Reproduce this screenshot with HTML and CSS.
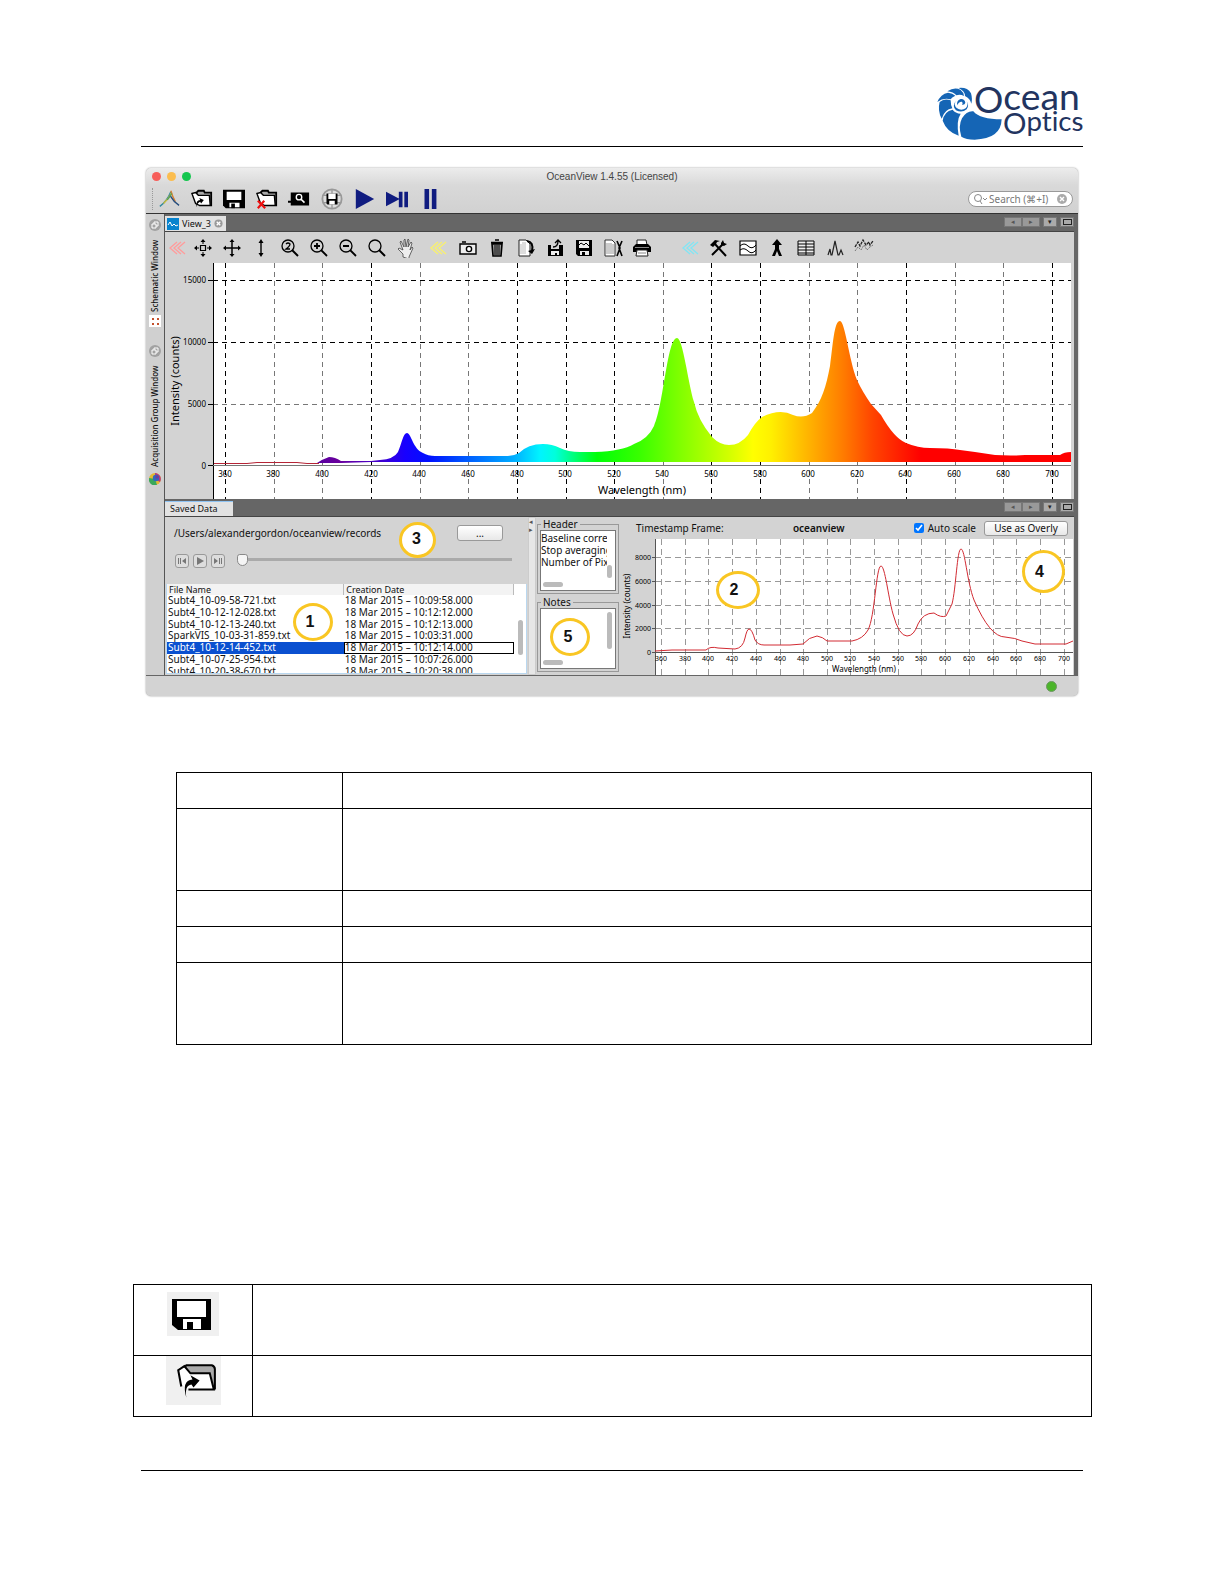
FILE: index.html
```html
<!DOCTYPE html>
<html lang="en">
<head>
<meta charset="utf-8">
<title>OceanView saved data</title>
<link rel="stylesheet" href="styles.css">
</head>
<body>
<header class="page-head">
  <svg class="brand" viewBox="48 42 435 168" role="img" aria-label="Ocean Optics">
    <g fill="#1565b5">
      <path d="M124 200Q114 168 126 145Q140 122 160 124Q180 148 245 148Q243 207 164 209Q138 209 124 200Z"/>
      <path d="M116 197Q80 185 68 152Q72 124 98 119Q106 130 122 131Q108 152 116 197Z"/>
      <path d="M65 146Q52 122 59 96Q72 84 92 91Q92 106 97 115Q74 118 65 146Z"/>
      <path d="M52 96Q62 72 84 68Q98 70 106 77Q95 82 92 88Q70 82 52 96Z"/>
      <path d="M82 64Q104 50 122 60Q132 68 132 78Q120 71 109 76Q100 66 82 64Z"/>
      <path d="M116 54Q142 51 153 70Q158 88 154 101Q151 86 135 78Q135 63 116 54Z"/>
      <path d="M108 92Q100 104 110 114Q124 124 138 114Q146 104 140 94Q149 106 140 118Q126 130 108 121Q95 108 108 92Z"/>
      <path d="M112 106Q108 92 122 87Q134 86 136 98Q134 106 126 104Q130 99 126 95Q116 94 112 106Z"/>
    </g>
    <g fill="#22345f" class="brand-text">
      <text x="162" y="129" font-size="110">O<tspan y="120" font-size="112">cean</tspan></text>
      <text x="249" y="193" font-size="88">O<tspan y="183" font-size="83">ptics</tspan></text>
    </g>
  </svg>
</header>

<section class="app">
  <div class="titlebar">
    <span class="light red"></span><span class="light amber"></span><span class="light green"></span>
    <h1>OceanView 1.4.55 (Licensed)</h1>
  </div>
  <div class="mainbar">
    <div class="tools">
      <button aria-label="Home"><svg viewBox="0 0 24 24"><g fill="none" stroke-width="1.500"><path d="M2 20Q10 14 14 4" stroke="#31899e"/><path d="M6 17Q12 11 15 5" stroke="#c9bb36"/><path d="M14 3Q16 10 19 15" stroke="#d58031"/><path d="M13 8Q17 15 23 19" stroke="#244c7c"/><path d="M10 13Q14 8 15 6" stroke="#50a05c"/></g></svg></button>
      <button aria-label="Open"><svg viewBox="0 0 24 24"><path d="M6 8V5l2-2h6l1 2h7v14H9" fill="#aaa" stroke="#000" stroke-width="2"/><path d="M1 6l4-1 3 3h12l1 11H9L5 17z" fill="#fff" stroke="#000" stroke-width="1.500"/><path d="M6 21Q5 13 10 13l-1-2 5 2-3 4-1-2Q7 16 6 21Z"/></svg></button>
      <button aria-label="Save"><svg viewBox="0 0 24 24"><path d="M0 2h24v20H3l-3-3z"/><path d="M4 4h16v9H4zM7 16h11v5H7z" fill="#fff"/><path d="M9 17h4v5H9z"/></svg></button>
      <button aria-label="Close project"><svg viewBox="0 0 24 24"><path d="M5 8V5l2-2h6l1 2h8v14H9" fill="#aaa" stroke="#000" stroke-width="2"/><path d="M1 6l4-1 3 3h12l1 11H9L5 17z" fill="#fff" stroke="#000" stroke-width="1.500"/><path d="M2 14l8 8M9 14l-7 8" stroke="#e11" stroke-width="2.400"/></svg></button>
      <button aria-label="Find devices"><svg viewBox="0 0 24 24"><path d="M3 5h20v14H3v-3H0v-2h3z"/><circle cx="12" cy="10" r="3" fill="none" stroke="#fff" stroke-width="1.500"/><path d="M14 12l4 4" stroke="#fff" stroke-width="1.800"/></svg></button>
      <button aria-label="Save to web"><svg viewBox="0 0 24 24"><circle cx="12" cy="12" r="10.500" fill="#ddd" stroke="#999" stroke-width="2"/><path d="M2 8h20M2 16h20M12 2v20" stroke="#999" stroke-width="1.500"/><path d="M6 6h12v12H7l-1-1z"/><path d="M8 6h8v6H8zM9 14h6v4H9z" fill="#fff"/></svg></button>
      <button aria-label="Play"><svg viewBox="0 0 24 24"><path d="M2 1l20 11L2 23z" fill="#101c80"/></svg></button>
      <button aria-label="Step"><svg viewBox="0 0 24 24"><path d="M0 4l15 8-15 8zM14 4h4v17h-4zM20 4h4v17h-4z" fill="#101c80"/></svg></button>
      <button aria-label="Pause"><svg viewBox="0 0 24 24"><path d="M6 1h5v22H6zM14 1h5v22h-5z" fill="#101c80"/></svg></button>
    </div>
    <label class="search"><svg viewBox="0 0 14 12"><circle cx="5" cy="5" r="3.500" fill="none" stroke="#888"/><path d="M7 8l2 3M10 5l2 2 2-2" fill="none" stroke="#888"/></svg><input type="text" aria-label="Search" placeholder="Search (⌘+I)"><svg class="clear" viewBox="0 0 12 12"><circle cx="6" cy="6" r="5" fill="#aaa"/><path d="M4 4l4 4M8 4l-4 4" stroke="#fff" stroke-width="1.400"/></svg></label>
  </div>

  <div class="body">
    <aside class="side">
      <svg class="pin" viewBox="0 0 12 12"><circle cx="6" cy="6" r="6" fill="#a2a2a2"/><path d="M3 5h4v4H3zM5 5V3h4v4H7" fill="none" stroke="#fff"/></svg>
      <span class="vtext schematic">Schematic Window</span>
      <svg class="pin gap-b" viewBox="0 0 12 12"><path d="M0 0h12v12H0z" fill="#fff"/><path d="M3 3h2v2H3zM8 3h2v2H8zM3 8h2v2H3zM8 8h2v2H8z" fill="#c4502c"/></svg>
      <svg class="pin" viewBox="0 0 12 12"><circle cx="6" cy="6" r="6" fill="#a2a2a2"/><path d="M3 5h4v4H3zM5 5V3h4v4H7" fill="none" stroke="#fff"/></svg>
      <span class="vtext acquisition">Acquisition Group Window</span>
      <svg class="pin" viewBox="0 0 12 12"><circle cx="6" cy="6" r="6" fill="#e3ba34"/><path d="M6 0a6 6 0 0 1 5 9L6 6z" fill="#b73682"/><path d="M0 5a6 6 0 0 0 8 7L6 6z" fill="#39a85b"/><circle cx="7" cy="5" r="3.200" fill="#3267bd"/><circle cx="8" cy="4" r="1.600" fill="#713a9c"/></svg>
    </aside>

    <div class="content">
      <div class="tabstrip">
        <div class="tab view-tab"><svg class="pin" viewBox="0 0 12 12"><path d="M0 0h12v12H0z" fill="#0783ce"/><path d="M1 7l2-3 2 4 2-2 2 2 2-1" fill="none" stroke="#fff"/></svg><span>View_3</span><svg class="close" viewBox="0 0 10 10"><circle cx="5" cy="5" r="4.500" fill="#999"/><path d="M3 3l4 4M7 3L3 7" stroke="#fff" stroke-width="1.400"/></svg></div>
        <div class="wincontrols"><button>◂</button><button>▸</button><button class="apart">▾</button><button class="apart" aria-label="Maximize"><i></i></button></div>
      </div>

      <div class="viewbar">
        <svg class="chev pink" viewBox="0 0 20 20"><path d="M10 4L3 10l7 6M14 4l-7 6 7 6M18 4l-7 6 7 6" fill="none" stroke="#ff9c9c" stroke-width="1.300"/></svg>
        <div class="icons">
          <button aria-label="Scale to fill"><svg viewBox="0 0 20 20"><path d="M7.500 7.500h5v5h-5z" fill="none" stroke="#000" stroke-width="1.200"/><path d="M10 1l2.500 3h-5zM10 19l2.500-3h-5zM1 10l3-2.500v5zM19 10l-3-2.500v5z"/><path d="M10 3v3M10 14v3M3 10h3M14 10h3" stroke="#000"/></svg></button>
          <button aria-label="Scale"><svg viewBox="0 0 20 20"><path d="M10 3v14M3 10h14" stroke="#000" stroke-width="1.500"/><path d="M10 1l2.500 3h-5zM10 19l2.500-3h-5zM1 10l3-2.500v5zM19 10l-3-2.500v5z"/></svg></button>
          <button aria-label="Scale height"><svg viewBox="0 0 20 20"><path d="M10 3v14" stroke="#000" stroke-width="1.400"/><path d="M10 1l2.500 4h-5zM10 19l2.500-4h-5z"/></svg></button>
          <button aria-label="Zoom reset"><svg viewBox="0 0 20 20"><circle cx="8" cy="8" r="6" fill="none" stroke="#000" stroke-width="1.300"/><path d="M12 12l6 6" stroke="#000" stroke-width="2"/><path d="M6 6q2-2 4 0 0 2-4 5h4" fill="none" stroke="#000" stroke-width="1.300"/></svg></button>
          <button aria-label="Zoom in"><svg viewBox="0 0 20 20"><circle cx="8" cy="8" r="6" fill="none" stroke="#000" stroke-width="1.300"/><path d="M12 12l6 6M5 8h6M8 5v6" stroke="#000" stroke-width="1.800"/></svg></button>
          <button aria-label="Zoom out"><svg viewBox="0 0 20 20"><circle cx="8" cy="8" r="6" fill="none" stroke="#000" stroke-width="1.300"/><path d="M12 12l6 6M5 8h6" stroke="#000" stroke-width="1.800"/></svg></button>
          <button aria-label="Zoom region"><svg viewBox="0 0 20 20"><circle cx="8" cy="8" r="6" fill="none" stroke="#000" stroke-width="1.300"/><path d="M12 12l6 6" stroke="#000" stroke-width="2"/></svg></button>
          <button aria-label="Pan"><svg viewBox="0 0 20 20"><path d="M7 19v-3L2 11l1-1 4 2L4 4l1-1 3 6V2l1-1 1 8 2-8 1 1-1 7 3-5 1 1-2 7 2-3 1 1-4 9v2z" fill="#eee" stroke="#444" stroke-width=".8"/></svg></button>
        </div>
        <svg class="chev yellow" viewBox="0 0 20 20"><path d="M10 4L3 10l7 6M14 4l-7 6 7 6M18 4l-7 6 7 6" fill="none" stroke="#f7ef73" stroke-width="1.500"/></svg>
        <div class="icons">
          <button aria-label="Snapshot"><svg viewBox="0 0 20 20"><path d="M2 6h16v10H2zM4 4h4" fill="#eee" stroke="#000" stroke-width="1.400"/><circle cx="11" cy="11" r="2.600" fill="#fff" stroke="#000" stroke-width="1.400"/></svg></button>
          <button aria-label="Delete"><svg viewBox="0 0 20 20"><path d="M4 4.500h12M8 2h4M5 6h10l-1 12H6z" fill="#999" stroke="#000" stroke-width="1.600"/><path d="M8 7v10M12 7v10M10 7v10" stroke="#000"/></svg></button>
          <button aria-label="Copy data"><svg viewBox="0 0 20 20"><path d="M3 2h7l4 4v12H3z" fill="#fff" stroke="#222"/><path d="M5 6v10M7 4v12M9 4v12" stroke="#bbb"/><path d="M11 3q7 1 5 10" stroke="#000" stroke-width="2" fill="none"/><path d="M19 11l-3 5-4-3z"/></svg></button>
          <button aria-label="Save settings"><svg viewBox="0 0 20 20"><path d="M3 7h3v4h8V7h4v11H3z"/><path d="M6 13h8v4H6z" fill="#eee"/><path d="M10 15h2v3h-2z"/><path d="M8 9q5 0 5-6M10 5l3-3 3 3" fill="none" stroke="#000" stroke-width="1.300"/></svg></button>
          <button aria-label="Save graph"><svg viewBox="0 0 20 20"><path d="M2 2h16v16H4l-2-2z"/><path d="M5 3h10v7H5zM6 13h9v4H6z" fill="#eee"/><path d="M5 7l2-2 3 2 2-2 3 3" fill="none" stroke="#000"/><path d="M8 14h3v3H8z"/></svg></button>
          <button aria-label="Configure saving"><svg viewBox="0 0 20 20"><path d="M2 2h7l3 3v13H2z" fill="#fff" stroke="#333"/><path d="M4 5v11M6 5v11M8 5v11M10 6v10" stroke="#999"/><path d="M14 3l3 7-3 8M19 3l-3 7 3 8" fill="none" stroke="#000" stroke-width="1.600"/></svg></button>
          <button aria-label="Print"><svg viewBox="0 0 20 20"><path d="M5 2h9l1 5H5z" fill="#fff" stroke="#222"/><path d="M1 9l3-3h12l3 3v5H1z"/><path d="M5 12h10l1 6H4z" fill="#fff" stroke="#222"/><path d="M3 9.500h14M6 15h8" stroke="#888"/></svg></button>
        </div>
        <svg class="chev cyan" viewBox="0 0 20 20"><path d="M10 4L3 10l7 6M14 4l-7 6 7 6M18 4l-7 6 7 6" fill="none" stroke="#82e5f4" stroke-width="1.300"/></svg>
        <div class="icons">
          <button aria-label="Tools"><svg viewBox="0 0 20 20"><path d="M5 5l12 13M15 5L3 17" stroke="#000" stroke-width="2"/><path d="M1 7l5-5 5 1-3 1-1 2-3 3zM12 5l2-3 1 3 3 1-3 2-3-1z"/></svg></button>
          <button aria-label="Overlay"><svg viewBox="0 0 20 20"><path d="M2 3h16v14H2z" fill="#fff" stroke="#000" stroke-width="1.200"/><path d="M2 8q4-4 8 0t8-1M2 12q4-3 8 1t8-1" fill="none" stroke="#000"/></svg></button>
          <button aria-label="Peaks"><svg viewBox="0 0 20 20"><path d="M10 1l5 6h-3v4l3 7h-3l-2-5-2 5H5l3-7V7H5z"/></svg></button>
          <button aria-label="Table"><svg viewBox="0 0 20 20"><path d="M2 3h16v14H2zM2 6h16M2 9h16M2 12h16M2 15h16M10 3v14" fill="#eee" stroke="#000"/></svg></button>
          <button aria-label="Peak metrics"><svg viewBox="0 0 20 20"><path d="M3 17l2-6 1 6h1l3-14 3 14h1l2-5 2 5" fill="none" stroke="#222" stroke-width="1.200"/></svg></button>
          <button aria-label="Trends"><svg viewBox="0 0 20 20"><path d="M1 9l3-5 2 4 3-6 3 5 3-3 1 3 3-4" fill="none" stroke="#222" stroke-width="1.300" stroke-dasharray="3 1"/><path d="M1 13l3-4 3 3 3-5 3 5 3-3 3-2" fill="none" stroke="#777" stroke-dasharray="2 1"/></svg></button>
        </div>
      </div>

      <svg class="chart" viewBox="165 263 909 236" role="img" aria-label="Intensity against wavelength">
        <defs><linearGradient id="spectrum" gradientUnits="userSpaceOnUse" x1="321" y1="0" x2="921" y2="0">
          <stop offset="0" stop-color="#5b00a0"/><stop offset=".03" stop-color="#6a009c"/><stop offset=".1" stop-color="#4000d0"/><stop offset=".14" stop-color="#1800ff"/><stop offset=".18" stop-color="#0010ff"/><stop offset=".24" stop-color="#0058ff"/><stop offset=".32" stop-color="#00acff"/><stop offset=".365" stop-color="#00f4ff"/><stop offset=".39" stop-color="#00ffdc"/><stop offset=".43" stop-color="#00ff60"/><stop offset=".46" stop-color="#00ff08"/><stop offset=".53" stop-color="#38ff00"/><stop offset=".6" stop-color="#82ff00"/><stop offset=".68" stop-color="#d2ff00"/><stop offset=".72" stop-color="#ffff00"/><stop offset=".75" stop-color="#fff000"/><stop offset=".82" stop-color="#ffac00"/><stop offset=".87" stop-color="#ff7c00"/><stop offset=".92" stop-color="#ff4400"/><stop offset="1" stop-color="#f00"/>
        </linearGradient></defs>
        <path d="M213 263h858v236H213z" fill="#fff"/>
        <g fill="none" stroke-dasharray="5 4">
          <path stroke="#777" d="M274.500 263v236M322.500 263v236M420.500 263v236M468.500 263v236M663.500 263v236M809.500 263v236M857.500 263v236M955.500 263v236M1003.500 263v236M213 404.500h858"/>
          <path stroke="#000" d="M225.500 263v236M371.500 263v236M517.500 263v236M566.500 263v236M614.500 263v236M711.500 263v236M760.500 263v236M906.500 263v236M1052.500 263v236M213 280.500h858M213 342.500h858"/>
        </g>
        <path fill="url(#spectrum)" d="M317 463Q323 459 329 457Q335 457 341 461L371 461 380 460Q394 459 398 452C402 443 403 433 407 433C411 433 413 449 423 453Q428 456 435 456L505 456Q514 456 519 453Q528 444 543 444Q552 444 560 448Q568 452 580 452L595 452Q622 451 634 444Q648 439 654 426C664 404 667 338 677 338C683 338 688 383 694 402Q698 420 712 437Q720 445 729 445Q740 445 748 435Q755 422 762 417Q780 408 793 415Q803 419 812 413C822 400 826 387 830 366C833 345 834 321 840 321C845 321 849 360 857 380Q862 391 871 404L881 415Q894 438 906 443Q918 448 930 448Q950 448 960 450L975 452Q1000 457 1025 455L1060 455Q1064 452 1071 452V462H371L341 463Z"/>
        <path d="M213 463.500h34l10-1h40l10 1h12" fill="none" stroke="#b52536"/>
        <path d="M213.500 263v236M208 280.500h5M208 342.500h5M208 404.500h5M208 465.500h5" stroke="#000"/><path d="M213 465.500h858" stroke="#777"/>
        <g class="tick" text-anchor="end"><text x="206" y="283">15000</text><text x="206" y="345">10000</text><text x="206" y="407">5000</text><text x="206" y="469">0</text></g>
        <g class="tick" text-anchor="middle"><text x="225" y="477">360</text><text x="273" y="477">380</text><text x="322" y="477">400</text><text x="371" y="477">420</text><text x="419" y="477">440</text><text x="468" y="477">460</text><text x="517" y="477">480</text><text x="565" y="477">500</text><text x="614" y="477">520</text><text x="662" y="477">540</text><text x="711" y="477">560</text><text x="760" y="477">580</text><text x="808" y="477">600</text><text x="857" y="477">620</text><text x="905" y="477">640</text><text x="954" y="477">660</text><text x="1003" y="477">680</text><text x="1052" y="477">700</text></g>
        <g class="axis" text-anchor="middle"><text x="642" y="494">Wavelength (nm)</text><text transform="translate(179 381) rotate(-90)">Intensity (counts)</text></g>
      </svg>

      <div class="tabstrip lower">
        <div class="tab saved-tab">Saved Data</div>
        <div class="wincontrols"><button>◂</button><button>▸</button><button class="apart">▾</button><button class="apart" aria-label="Maximize"><i></i></button></div>
      </div>

      <div class="saved">
        <section class="files">
          <div class="path"><span>/Users/alexandergordon/oceanview/records</span><button class="push browse">...</button></div>
          <div class="playback">
            <button aria-label="Previous"><svg viewBox="0 0 12 12"><path d="M2 3h1v6H2zM4 3h1v6H4zM10 3v6L6 6z" fill="#777"/></svg></button>
            <button aria-label="Play"><svg viewBox="0 0 12 12"><path d="M3 2l7 4-7 4z" fill="#777"/></svg></button>
            <button aria-label="Next"><svg viewBox="0 0 12 12"><path d="M2 3v6l4-3zM7 3h1v6H7zM9 3h1v6H9z" fill="#777"/></svg></button>
            <input type="range" aria-label="Position" min="0" max="100" value="0">
          </div>
          <div class="filelist">
            <table>
              <thead><tr><th>File Name</th><th>Creation Date</th></tr></thead>
              <tbody>
                <tr><td>Subt4_10-09-58-721.txt</td><td>18 Mar 2015 – 10:09:58.000</td></tr>
                <tr><td>Subt4_10-12-12-028.txt</td><td>18 Mar 2015 – 10:12:12.000</td></tr>
                <tr><td>Subt4_10-12-13-240.txt</td><td>18 Mar 2015 – 10:12:13.000</td></tr>
                <tr><td>SparkVIS_10-03-31-859.txt</td><td>18 Mar 2015 – 10:03:31.000</td></tr>
                <tr class="selected"><td>Subt4_10-12-14-452.txt</td><td>18 Mar 2015 – 10:12:14.000</td></tr>
                <tr><td>Subt4_10-07-25-954.txt</td><td>18 Mar 2015 – 10:07:26.000</td></tr>
                <tr><td>Subt4_10-20-38-670.txt</td><td>18 Mar 2015 – 10:20:38.000</td></tr>
              </tbody>
            </table>
            <span class="scroll"></span>
          </div>
          <b class="callout c1">1</b><b class="callout c3">3</b>
        </section>
        <div class="split">◂<br>▸</div>
        <section class="info">
          <fieldset><legend>Header</legend><div class="box"><p>Baseline corre<br>Stop averaging<br>Number of Pix</p><span class="vbar short"></span><span class="hbar"></span></div></fieldset>
          <fieldset><legend>Notes</legend><div class="box"><span class="vbar"></span><span class="hbar"></span></div></fieldset>
          <b class="callout c5">5</b>
        </section>
        <section class="preview">
          <div class="previewbar"><span>Timestamp Frame:</span><strong>oceanview</strong><label><input type="checkbox" checked>Auto scale</label><button class="push overlay">Use as Overly</button></div>
          <svg class="chart" viewBox="621 539 453 136" role="img" aria-label="Saved spectrum">
            <path d="M655 539h418v136H655z" fill="#fff"/>
            <path fill="none" stroke="#999" stroke-dasharray="6 4" d="M661.500 539v136M685.500 539v136M708.500 539v136M732.500 539v136M756.500 539v136M780.500 539v136M803.500 539v136M827.500 539v136M850.500 539v136M874.500 539v136M898.500 539v136M921.500 539v136M945.500 539v136M969.500 539v136M993.500 539v136M1016.500 539v136M1040.500 539v136M1064.500 539v136M655 557.500h418M655 581.500h418M655 605.500h418M655 628.500h418"/>
            <path d="M655.500 539v136M655 652.500h418M652 557.500h3M652 581.500h3M652 605.500h3M652 628.500h3M652 652.500h3" stroke="#555"/>
            <path fill="none" stroke="#d22b33" d="M655 651L672 650 706 650Q710 646 718 648L735 649Q743 648 745 638Q747 629 749 629Q752 629 755 640Q758 645 764 645L790 645 803 644Q809 637 817 636Q823 637 827 641L852 641Q863 639 868 630C875 617 876 566 881 566C885 566 888 596 893 614Q899 636 907 636Q914 636 918 624Q923 613 934 613Q941 618 946 616L952 604C956 589 957 549 961 549C965 549 967 582 974 600Q990 637 1005 637Q1016 638 1022 641L1035 644 1066 644 1073 641"/>
            <g class="minitick" text-anchor="end"><text x="651" y="560">8000</text><text x="651" y="584">6000</text><text x="651" y="608">4000</text><text x="651" y="631">2000</text><text x="651" y="655">0</text></g>
            <g class="minitick" text-anchor="middle"><text x="661" y="661">360</text><text x="685" y="661">380</text><text x="708" y="661">400</text><text x="732" y="661">420</text><text x="756" y="661">440</text><text x="780" y="661">460</text><text x="803" y="661">480</text><text x="827" y="661">500</text><text x="850" y="661">520</text><text x="874" y="661">540</text><text x="898" y="661">560</text><text x="921" y="661">580</text><text x="945" y="661">600</text><text x="969" y="661">620</text><text x="993" y="661">640</text><text x="1016" y="661">660</text><text x="1040" y="661">680</text><text x="1064" y="661">700</text></g>
            <g class="miniaxis" text-anchor="middle"><text x="864" y="672">Wavelength (nm)</text><text transform="translate(630 606) rotate(-90)">Intensity (counts)</text></g>
          </svg>
          <b class="callout c2">2</b><b class="callout c4">4</b>
        </section>
      </div>
    </div>
  </div>
  <footer class="status"><span class="led"></span></footer>
</section>

<table class="legend">
  <tbody>
    <tr class="r36"><td></td><td></td></tr>
    <tr class="r82"><td></td><td></td></tr>
    <tr class="r36"><td></td><td></td></tr>
    <tr class="r36"><td></td><td></td></tr>
    <tr class="r82"><td></td><td></td></tr>
  </tbody>
</table>

<table class="iconlist">
  <tbody>
    <tr class="save-row"><td><span class="tile"><svg viewBox="0 0 52 44" role="img" aria-label="Save"><path d="M5 7h39v31H11l-6-5z"/><path d="M10 9h29v16H10zM16 27h18v10H16z" fill="#fff"/><path d="M20 30h6v8h-6z"/></svg></span></td><td></td></tr>
    <tr class="open-row"><td><span class="tile"><svg viewBox="0 0 54 48" role="img" aria-label="Open"><path d="M16 14l4-5h25q3 1 3 4v20" fill="#aaa" stroke="#000" stroke-width="2"/><path d="M12 13l6-2 6 6h20l3 16H22L15 28z" fill="#fff"/><path d="M15 30L12 14l6-4 6 7h19l4 16H22" fill="none" stroke="#000" stroke-width="2"/><path d="M20 41Q15 24 26 23l-2-4 9 5-6 7-2-3Q18 29 20 41Z"/></svg></span></td><td></td></tr>
  </tbody>
</table>
<hr class="foot">
</body>
</html>
```
FILE: styles.css
```css
* { box-sizing: border-box; }
body { margin: 0; background: #fff; color: #111; font: 10px/12px "Noto Sans", sans-serif; }
button { margin: 0; padding: 0; border: 0; background: none; font: inherit; color: inherit; }
svg { display: block; }
h1, p { margin: 0; }

.page-head { height: 147px; margin: 0 141px; padding-top: 84px; border-bottom: 1px solid #000; display: flex; justify-content: flex-end; }
.brand { width: 145px; height: 56px; margin-right: 2px; overflow: visible; }
.brand-text { font-family: Lato, sans-serif; font-variant-ligatures: none; }

.app { margin: 21px 146px 0; background: #d3d3d3; border-radius: 5px; box-shadow: 0 0 2px #888; }
.titlebar { height: 17px; padding-left: 6px; display: flex; align-items: center; gap: 6px; background: linear-gradient(#ececec, #d9d9d9); border-radius: 5px 5px 0 0; }
.light { width: 9px; height: 9px; border-radius: 50%; }
.red { background: #f75e5a; }
.amber { background: #fbbd4f; }
.green { background: #14c64e; }
.titlebar h1 { flex: 1; text-align: center; padding-right: 51px; font: 10px/16px "Liberation Sans", sans-serif; color: #444; }
.mainbar { height: 29px; padding: 0 5px 0 6px; display: flex; justify-content: space-between; align-items: center; border-bottom: 1px solid #333; background: linear-gradient(#d9d9d9, #d1d1d1); }
.tools { width: 294px; display: grid; grid-template-columns: repeat(9, 1fr); justify-items: center; border-left: 1px dotted #999; }
.tools svg { width: 22px; height: 22px; }
.search { width: 105px; height: 16px; padding: 0 4px; display: flex; align-items: center; border: 1px solid #999; border-radius: 8px; background: #fff; }
.search svg { flex: none; width: 14px; height: 12px; }
.search .clear { width: 12px; }
.search input { flex: 1; min-width: 0; padding: 0 2px; border: 0; background: none; font: inherit; }
.search input::placeholder { color: #777; }

.body { display: flex; border-bottom: 1px solid #666; }
.side { width: 19px; padding-top: 5px; display: flex; flex-direction: column; align-items: center; border-right: 1px solid #555; background: #d0d0d0; }
.pin { flex: none; width: 12px; height: 12px; }
.gap-b { margin-bottom: 18px; }
.vtext { writing-mode: vertical-rl; transform: rotate(180deg); font-size: 8px; font-weight: 500; line-height: 12px; white-space: nowrap; }
.schematic { height: 84px; padding-top: 3px; }
.acquisition { height: 116px; padding-top: 6px; }

.content { flex: 1; min-width: 0; border-right: 4px solid #666; }
.tabstrip { height: 18px; padding: 2px 0 0; display: flex; justify-content: space-between; align-items: flex-start; background: #666; border-bottom: 1px solid #444; }
.tab { height: 15px; display: flex; align-items: center; background: #e2e2e2; }
.view-tab { width: 61px; padding: 0 3px 0 2px; justify-content: space-between; font-size: 9px; }
.close { width: 9px; height: 9px; }
.saved-tab { width: 68px; padding-left: 5px; font-size: 9px; border-top: 1px solid #8fc3f2; }
.wincontrols { display: flex; padding-top: 1px; }
.wincontrols button { width: 18px; height: 10px; border: 1px solid #777; background: #999; color: #555; font-size: 7px; line-height: 8px; }
.wincontrols .apart { width: 14px; margin-left: 3px; background: #aaa; color: #222; }
.wincontrols i { display: block; width: 9px; height: 6px; margin: auto; border: 1px solid #222; }
.viewbar { height: 31px; display: flex; align-items: center; background: #d3d3d3; }
.icons { display: flex; gap: 9px; }
.icons svg, .chev { flex: none; width: 20px; height: 20px; }
.pink { margin: 0 6px 0 2px; }
.yellow { margin: 0 10px 0 12px; }
.cyan { margin: 0 9px 0 28px; }
.chart { width: 100%; height: auto; }
.tick { font: 8px "Noto Sans", sans-serif; }
.axis { font: 11px "Noto Sans", sans-serif; }
.minitick { font: 7px "Noto Sans", sans-serif; }
.miniaxis { font: 8px "Noto Sans", sans-serif; }

.saved { display: grid; grid-template-columns: 363fr 8px 85px 453fr; background: #d3d3d3; }
.files, .info, .preview { position: relative; min-width: 0; }
.path { height: 32px; padding: 0 25px 0 9px; display: flex; align-items: center; justify-content: space-between; }
.push { border: 1px solid #999; border-radius: 3px; background: linear-gradient(#fff, #e8e8e8); }
.browse { width: 46px; height: 16px; }
.playback { height: 35px; padding: 5px 16px 0 10px; display: flex; align-items: flex-start; gap: 4px; }
.playback button { width: 14px; height: 14px; border: 1px solid #999; border-radius: 3px; background: #ddd; }
.playback input { flex: 1; height: 12px; margin: 0 0 0 8px; appearance: none; background: linear-gradient(#aaa, #aaa) 0 4px / 100% 3px no-repeat; }
.playback input::-webkit-slider-thumb { appearance: none; width: 11px; height: 12px; border: 1px solid #888; border-radius: 3px 3px 6px 6px; background: #f5f5f5; }
.filelist { height: 90px; margin: 0 1px; overflow: hidden; display: flex; align-items: flex-start; background: #fff; border: 1px solid #b9d7ef; border-width: 0 1px 1px; }
.filelist table { flex: 1; border-collapse: collapse; table-layout: fixed; height: 93px; }
.filelist th { height: 11px; padding: 0 2px; text-align: left; font-weight: 400; font-size: 9px; line-height: 10px; background: #f3f3f3; border-right: 1px solid #bbb; }
.filelist th:first-child { width: 51%; }
.filelist td { padding: 0 1px; line-height: 11px; white-space: nowrap; }
.selected td:first-child { background: #0a50d0; color: #fff; }
.selected td:last-child { outline: 1px solid #000; outline-offset: -1px; }
.scroll { width: 5px; height: 35px; margin: 36px 3px 0 4px; border-radius: 3px; background: #bbb; }
.split { background: #e7e7e7; border: 1px solid #ccc; font-size: 7px; line-height: 8px; color: #555; }
.info { padding: 1px 2px 2px 1px; display: flex; flex-direction: column; gap: 2px; }
fieldset { min-width: 0; height: 76px; margin: 0; padding: 0 2px 1px; border: 1px solid #999; }
legend { margin-left: 1px; padding: 0 2px; line-height: 12px; }
.box { height: 61px; padding: 1px 0; position: relative; overflow: hidden; border: 1px solid #777; background: #fff; }
.box p { width: 66px; overflow: hidden; white-space: nowrap; }
.vbar, .hbar { position: absolute; border-radius: 3px; background: #bbb; }
.vbar { right: 3px; top: 3px; width: 5px; height: 37px; }
.short { top: 34px; height: 13px; }
.hbar { left: 2px; bottom: 3px; width: 20px; height: 5px; }
.previewbar { height: 22px; padding: 0 6px 0 15px; display: flex; align-items: center; }
.previewbar strong { margin-left: auto; font-weight: 600; }
.previewbar label { margin: 0 8px 0 auto; display: flex; align-items: center; gap: 4px; }
.previewbar input { width: 10px; height: 10px; margin: 0; }
.overlay { width: 84px; height: 15px; line-height: 12px; }
.callout { position: absolute; width: 40px; height: 38px; border: 3px solid #f9c623; border-radius: 50%; background: #fff; text-align: center; font: bold 16px/32px "Liberation Sans", sans-serif; }
.c1 { left: 128px; top: 86px; padding-right: 6px; }
.c2 { left: 95px; top: 54px; width: 44px; padding-right: 8px; }
.c3 { left: 234px; top: 5px; width: 37px; height: 36px; padding-right: 2px; line-height: 28px; }
.c4 { right: 9px; top: 33px; width: 43px; height: 43px; padding-right: 8px; line-height: 38px; }
.c5 { left: 14px; top: 101px; padding-right: 4px; }
.status { height: 20px; padding-right: 21px; display: flex; justify-content: flex-end; align-items: center; }
.led { width: 11px; height: 11px; border-radius: 50%; border: 1px solid #6d9863; background: #4cb52a; }

.legend, .iconlist { border-collapse: collapse; table-layout: fixed; }
.legend td, .iconlist td { padding: 0; border: 1px solid #000; vertical-align: top; }
.legend { width: calc(100% - 308px); margin: 76px 132px 0 176px; }
.legend td:first-child { width: 166px; }
.r36 { height: 36px; }
.r82 { height: 82px; }
.iconlist { width: calc(100% - 265px); margin: 239px 132px 0 133px; }
.iconlist td:first-child { width: 119px; }
.save-row { height: 71px; }
.open-row { height: 61px; }
.tile { display: block; width: 52px; margin: 0 auto; background: #f0f0f0; }
.save-row .tile { margin-top: 7px; }
.open-row .tile { width: 55px; }
.tile svg { width: 100%; }
.foot { margin: 53px 141px 113px; border: 0; border-top: 1px solid #000; }
```
